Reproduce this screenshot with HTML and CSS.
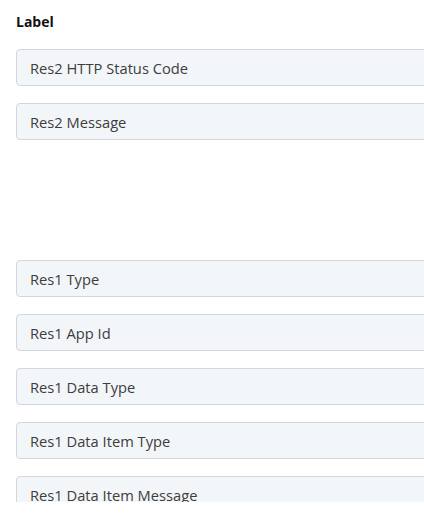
FILE: index.html
```html
<!DOCTYPE html>
<html>
<head>
<meta charset="utf-8">
<link rel="stylesheet" href="styles.css">
</head>
<body>
<div class="page">
  <div class="label">Label</div>
  <div class="group">
    <div class="field">Res2 HTTP Status Code</div>
    <div class="field">Res2 Message</div>
  </div>
  <div class="group lower">
    <div class="field">Res1 Type</div>
    <div class="field">Res1 App Id</div>
    <div class="field">Res1 Data Type</div>
    <div class="field">Res1 Data Item Type</div>
    <div class="field">Res1 Data Item Message</div>
  </div>
</div>
</body>
</html>
```
FILE: styles.css
```css
html, body {
  margin: 0;
  padding: 0;
  background: #ffffff;
}
.page {
  height: 502px;
  overflow: hidden;
  padding: 13px 0 0 16px;
  box-sizing: border-box;
  font-family: "Open Sans", Lato, sans-serif;
}
.label {
  font-size: 14px;
  font-weight: 700;
  color: #111;
  line-height: 18px;
  height: 18px;
}
.group {
  display: flex;
  flex-direction: column;
  gap: 17px;
  margin-top: 18px;
}
.group.lower {
  margin-top: 120px;
}
.field {
  height: 37px;
  box-sizing: border-box;
  width: 420px;
  border: 1px solid #d3d7dd;
  border-radius: 4px;
  background: #f3f6f9;
  color: #3d3d3d;
  font-size: 14.7px;
  display: flex;
  align-items: center;
  padding-left: 13px;
}
```
